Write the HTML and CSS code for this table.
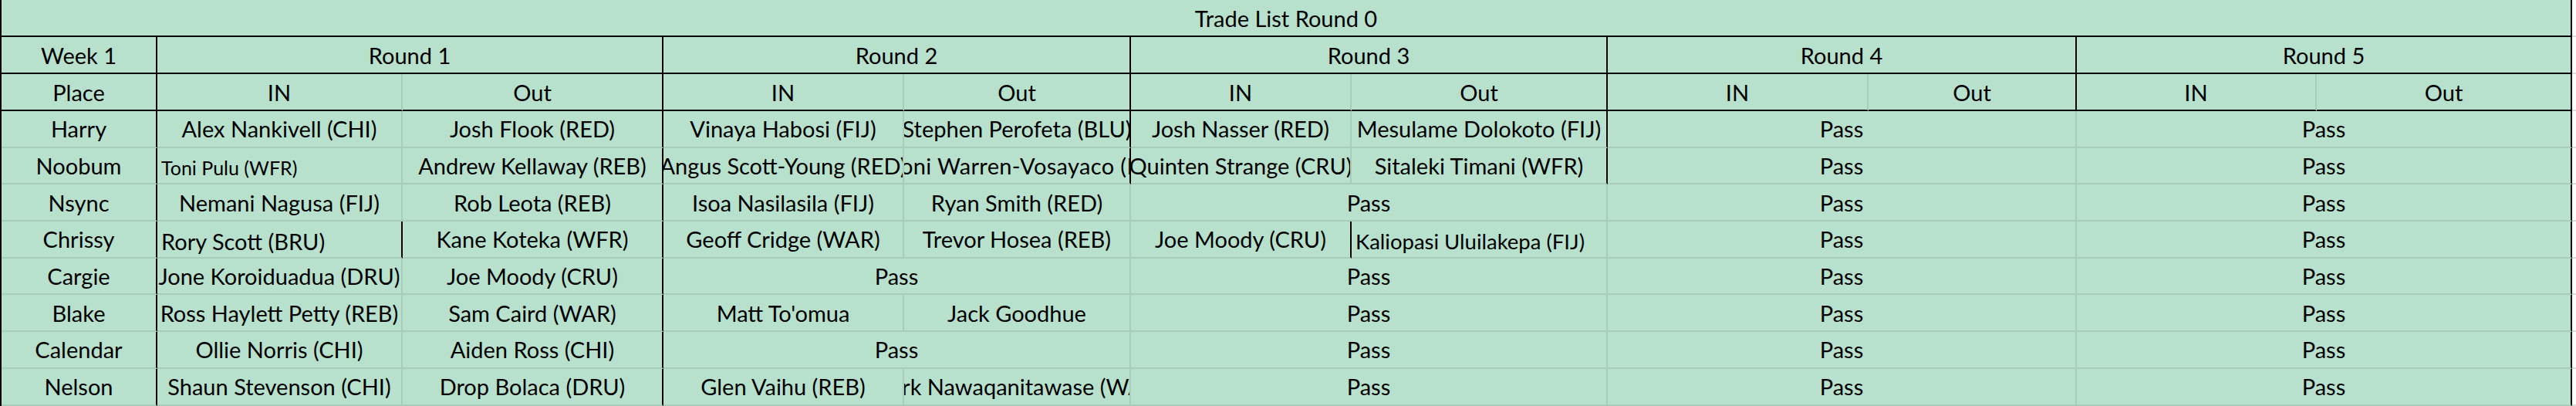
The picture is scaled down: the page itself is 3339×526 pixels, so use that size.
FILE: index.html
```html
<!DOCTYPE html>
<html lang="en">
<head>
<meta charset="utf-8">
<title>Trade List Round 0</title>
<link rel="stylesheet" href="styles.css">
</head>
<body>
<div class="sheet">
  <!-- title row -->
  <div class="c title rb bb"><span>Trade List Round 0</span></div>
  <div class="tail"></div>

  <!-- round header row -->
  <div class="c rb bb"><span>Week 1</span></div>
  <div class="c s2 rb bb"><span>Round 1</span></div>
  <div class="c s2 rb bb"><span>Round 2</span></div>
  <div class="c s2 rb bb"><span>Round 3</span></div>
  <div class="c s2 rb bb"><span>Round 4</span></div>
  <div class="c s2 rb bb"><span>Round 5</span></div>
  <div class="tail"></div>

  <!-- in/out header row -->
  <div class="c rb bb"><span>Place</span></div>
  <div class="c bb"><span>IN</span></div>
  <div class="c rb bb"><span>Out</span></div>
  <div class="c bb"><span>IN</span></div>
  <div class="c rb bb"><span>Out</span></div>
  <div class="c bb"><span>IN</span></div>
  <div class="c rb bb"><span>Out</span></div>
  <div class="c bb"><span>IN</span></div>
  <div class="c rb bb"><span>Out</span></div>
  <div class="c bb"><span>IN</span></div>
  <div class="c rb bb"><span>Out</span></div>
  <div class="tail"></div>

  <!-- Harry -->
  <div class="c rb"><span>Harry</span></div>
  <div class="c"><span>Alex Nankivell (CHI)</span></div>
  <div class="c rb"><span>Josh Flook (RED)</span></div>
  <div class="c"><span>Vinaya Habosi (FIJ)</span></div>
  <div class="c rb"><span>Stephen Perofeta (BLU)</span></div>
  <div class="c"><span>Josh Nasser (RED)</span></div>
  <div class="c rb"><span>Mesulame Dolokoto (FIJ)</span></div>
  <div class="c s2"><span>Pass</span></div>
  <div class="c s2 rb"><span>Pass</span></div>
  <div class="tail"></div>

  <!-- Noobum -->
  <div class="c rb"><span>Noobum</span></div>
  <div class="c lb small"><span>Toni Pulu (WFR)</span></div>
  <div class="c rb"><span>Andrew Kellaway (REB)</span></div>
  <div class="c"><span>Angus Scott-Young (RED)</span></div>
  <div class="c rb shift"><span>Toni Warren-Vosayaco (BLU)</span></div>
  <div class="c"><span>Quinten Strange (CRU)</span></div>
  <div class="c rb"><span>Sitaleki Timani (WFR)</span></div>
  <div class="c s2"><span>Pass</span></div>
  <div class="c s2 rb"><span>Pass</span></div>
  <div class="tail"></div>

  <!-- Nsync -->
  <div class="c rb"><span>Nsync</span></div>
  <div class="c"><span>Nemani Nagusa (FIJ)</span></div>
  <div class="c rb"><span>Rob Leota (REB)</span></div>
  <div class="c"><span>Isoa Nasilasila (FIJ)</span></div>
  <div class="c"><span>Ryan Smith (RED)</span></div>
  <div class="c s2"><span>Pass</span></div>
  <div class="c s2"><span>Pass</span></div>
  <div class="c s2 rb"><span>Pass</span></div>
  <div class="tail"></div>

  <!-- Chrissy -->
  <div class="c rb"><span>Chrissy</span></div>
  <div class="c rb lb"><span>Rory Scott (BRU)</span></div>
  <div class="c rb"><span>Kane Koteka (WFR)</span></div>
  <div class="c"><span>Geoff Cridge (WAR)</span></div>
  <div class="c"><span>Trevor Hosea (REB)</span></div>
  <div class="c rb"><span>Joe Moody (CRU)</span></div>
  <div class="c lb small mid"><span>Kaliopasi Uluilakepa (FIJ)</span></div>
  <div class="c s2"><span>Pass</span></div>
  <div class="c s2 rb"><span>Pass</span></div>
  <div class="tail"></div>

  <!-- Cargie -->
  <div class="c rb"><span>Cargie</span></div>
  <div class="c"><span>Jone Koroiduadua (DRU)</span></div>
  <div class="c rb"><span>Joe Moody (CRU)</span></div>
  <div class="c s2"><span>Pass</span></div>
  <div class="c s2"><span>Pass</span></div>
  <div class="c s2"><span>Pass</span></div>
  <div class="c s2 rb"><span>Pass</span></div>
  <div class="tail"></div>

  <!-- Blake -->
  <div class="c rb"><span>Blake</span></div>
  <div class="c"><span>Ross Haylett Petty (REB)</span></div>
  <div class="c rb"><span>Sam Caird (WAR)</span></div>
  <div class="c"><span>Matt To'omua</span></div>
  <div class="c"><span>Jack Goodhue</span></div>
  <div class="c s2"><span>Pass</span></div>
  <div class="c s2"><span>Pass</span></div>
  <div class="c s2 rb"><span>Pass</span></div>
  <div class="tail"></div>

  <!-- Calendar -->
  <div class="c rb"><span>Calendar</span></div>
  <div class="c"><span>Ollie Norris (CHI)</span></div>
  <div class="c rb"><span>Aiden Ross (CHI)</span></div>
  <div class="c s2"><span>Pass</span></div>
  <div class="c s2"><span>Pass</span></div>
  <div class="c s2"><span>Pass</span></div>
  <div class="c s2 rb"><span>Pass</span></div>
  <div class="tail"></div>

  <!-- Nelson -->
  <div class="c rb"><span>Nelson</span></div>
  <div class="c"><span>Shaun Stevenson (CHI)</span></div>
  <div class="c rb"><span>Drop Bolaca (DRU)</span></div>
  <div class="c"><span>Glen Vaihu (REB)</span></div>
  <div class="c"><span>Mark Nawaqanitawase (WAR)</span></div>
  <div class="c s2"><span>Pass</span></div>
  <div class="c s2"><span>Pass</span></div>
  <div class="c s2 rb"><span>Pass</span></div>
  <div class="tail"></div>
</div>
</body>
</html>
```

FILE: styles.css
```css
:root {
  --fill: #b7e1cd;
  --grid: #a7ccba;
  --line: #000000;
}

html, body {
  margin: 0;
  padding: 0;
  background: #ffffff;
}

body {
  font-family: Lato, "Open Sans", sans-serif;
  font-size: 29px;
  color: #000000;
  overflow: hidden;
}

.sheet {
  display: grid;
  grid-template-columns: 202px 318px 338px 312px 294px 286px 332px 338px 270px 311px 331px 1fr;
  grid-template-rows: 48px 48px 48px repeat(8, 47.7px);
  border-left: 2px solid var(--line);
}

.c {
  box-sizing: border-box;
  min-width: 0;
  background: var(--fill);
  border-right: 2px solid var(--grid);
  border-bottom: 2px solid var(--grid);
  display: flex;
  align-items: center;
  justify-content: center;
  overflow: hidden;
  white-space: nowrap;
}

.c > span {
  flex: none;
}

.rb {
  border-right-color: var(--line);
}

.bb {
  border-bottom-color: var(--line);
}

.s2 {
  grid-column: span 2;
}

.title {
  grid-column: span 11;
}

.tail {
  box-sizing: border-box;
  background: #ffffff;
  border-bottom: 2px solid #dcdcdc;
}

.lb {
  justify-content: flex-start;
  align-items: flex-end;
  padding: 0 0 3px 5px;
}

.small {
  font-size: 25px;
  padding-bottom: 5px;
}

.small.mid {
  font-size: 27.5px;
  padding-bottom: 4px;
}

.shift {
  justify-content: flex-start;
}

.shift > span {
  margin-left: -19px;
  letter-spacing: 0.35px;
}
```
